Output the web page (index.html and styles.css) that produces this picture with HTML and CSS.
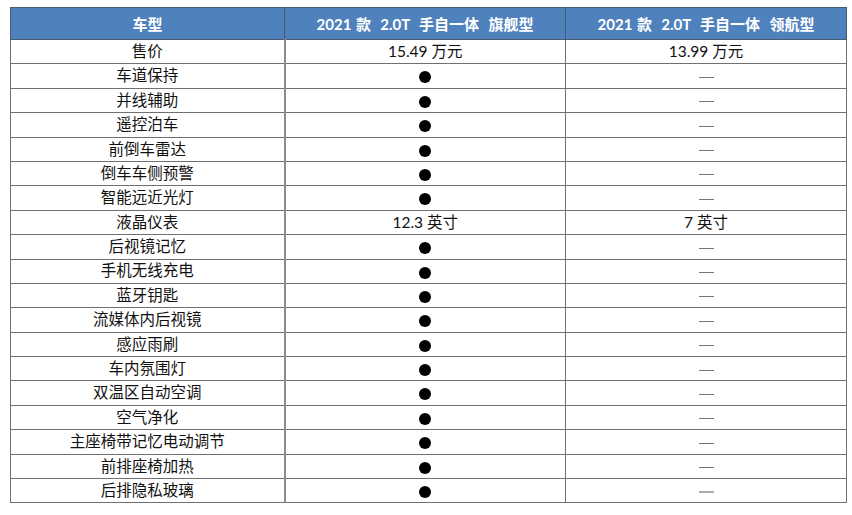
FILE: index.html
```html
<!DOCTYPE html>
<html lang="zh">
<head>
<meta charset="utf-8">
<title>配置对比</title>
<link rel="stylesheet" href="styles.css">
</head>
<body>
<table class="spec">
  <thead>
    <tr class="head-row">
      <th class="c1">车型</th>
      <th class="c2">2021 款&nbsp; 2.0T&nbsp; 手自一体&nbsp; 旗舰型</th>
      <th class="c3">2021 款&nbsp; 2.0T&nbsp; 手自一体&nbsp; 领航型</th>
    </tr>
  </thead>
  <tbody>
    <tr><td>售价</td><td>15.49 万元</td><td>13.99 万元</td></tr>
    <tr><td>车道保持</td><td><span class="dot"></span></td><td><span class="dash"></span></td></tr>
    <tr><td>并线辅助</td><td><span class="dot"></span></td><td><span class="dash"></span></td></tr>
    <tr><td>遥控泊车</td><td><span class="dot"></span></td><td><span class="dash"></span></td></tr>
    <tr><td>前倒车雷达</td><td><span class="dot"></span></td><td><span class="dash"></span></td></tr>
    <tr><td>倒车车侧预警</td><td><span class="dot"></span></td><td><span class="dash"></span></td></tr>
    <tr><td>智能远近光灯</td><td><span class="dot"></span></td><td><span class="dash"></span></td></tr>
    <tr><td>液晶仪表</td><td>12.3 英寸</td><td>7 英寸</td></tr>
    <tr><td>后视镜记忆</td><td><span class="dot"></span></td><td><span class="dash"></span></td></tr>
    <tr><td>手机无线充电</td><td><span class="dot"></span></td><td><span class="dash"></span></td></tr>
    <tr><td>蓝牙钥匙</td><td><span class="dot"></span></td><td><span class="dash"></span></td></tr>
    <tr><td>流媒体内后视镜</td><td><span class="dot"></span></td><td><span class="dash"></span></td></tr>
    <tr><td>感应雨刷</td><td><span class="dot"></span></td><td><span class="dash"></span></td></tr>
    <tr><td>车内氛围灯</td><td><span class="dot"></span></td><td><span class="dash"></span></td></tr>
    <tr><td>双温区自动空调</td><td><span class="dot"></span></td><td><span class="dash"></span></td></tr>
    <tr><td>空气净化</td><td><span class="dot"></span></td><td><span class="dash"></span></td></tr>
    <tr><td>主座椅带记忆电动调节</td><td><span class="dot"></span></td><td><span class="dash"></span></td></tr>
    <tr><td>前排座椅加热</td><td><span class="dot"></span></td><td><span class="dash"></span></td></tr>
    <tr><td>后排隐私玻璃</td><td><span class="dot"></span></td><td><span class="dash light"></span></td></tr>
  </tbody>
</table>
</body>
</html>
```

FILE: styles.css
```css
html, body {
  margin: 0;
  padding: 0;
  background: #ffffff;
}

body {
  padding: 7px 0 0 10px;
  font-family: Lato, "Noto Sans CJK SC", sans-serif;
  color: #111;
}

.spec {
  border-collapse: collapse;
  table-layout: fixed;
  width: 833px;
}

.spec th,
.spec td {
  padding: 0;
  text-align: center;
  vertical-align: middle;
  white-space: nowrap;
}

.spec th {
  height: 31px;
  background: #4f81bd;
  color: #ffffff;
  font-size: 15px;
  font-weight: 700;
  word-spacing: 1px;
  border: 1px solid #4a5a70;
}

.spec th.c1 { width: 273px; }
.spec th.c2 { width: 280px; }
.spec th.c3 { width: 280px; }

.spec td {
  height: 23.4px;
  font-size: 15.5px;
  line-height: 1;
  border: 1px solid #707070;
}

.spec tbody td:first-child {
  border-right: 2px solid #8c8c8c;
}

.dot {
  display: inline-block;
  width: 12px;
  height: 12px;
  border-radius: 50%;
  background: #000;
  vertical-align: middle;
}

.dash {
  display: inline-block;
  width: 15px;
  height: 1px;
  background: #777;
  vertical-align: middle;
}

.dash.light {
  background: #aaa;
  height: 2px;
}
```
